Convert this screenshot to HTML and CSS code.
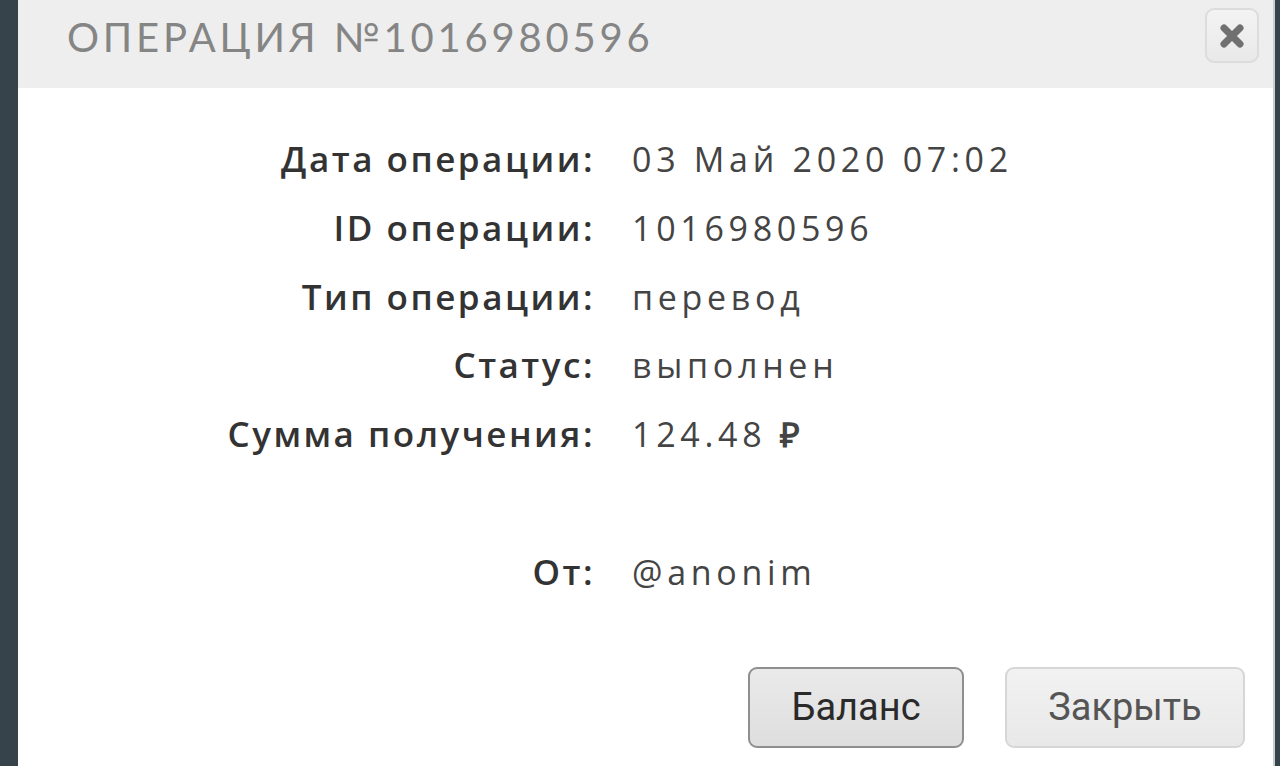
FILE: index.html
```html
<!DOCTYPE html>
<html>
<head>
    <title>Операция №1016980596</title>
    <link rel="stylesheet" href="styles.css">
</head>

<body>
    <div class="dialog">

        <div class="dialog-head">
            <h1>Операция №1016980596</h1>
            <button class="close-btn" type="button">
                <svg width="26" height="26" viewBox="0 0 26 26">
                    <path d="M5 5 L21 21 M21 5 L5 21" stroke="#707070" stroke-width="7" stroke-linecap="round"/>
                </svg>
            </button>
        </div>

        <div class="dialog-body">
            <div class="details">
                <div class="label">Дата операции:</div>
                <div class="value">03 Май 2020 07:02</div>
                <div class="label">ID операции:</div>
                <div class="value">1016980596</div>
                <div class="label">Тип операции:</div>
                <div class="value">перевод</div>
                <div class="label">Статус:</div>
                <div class="value">выполнен</div>
                <div class="label">Сумма получения:</div>
                <div class="value">124.48 <span class="rub">₽</span></div>
                <div class="label from">От:</div>
                <div class="value from">@anonim</div>
            </div>

            <div class="buttons">
                <button type="button" class="btn btn-main">Баланс</button>
                <button type="button" class="btn">Закрыть</button>
            </div>
        </div>

    </div>
</body>
</html>
```

FILE: styles.css
```css
body {
    margin: 0;
    background: #36434b;
    height: 766px;
    overflow: hidden;
    font-family: "Open Sans", Arial, sans-serif;
}

.dialog {
    margin: 0 5px 0 18px;
    height: 766px;
    background: #fff;
    border-right: 2px solid #c9ced1;
}

.dialog-head {
    height: 88px;
    background: #eeeeee;
    display: flex;
    align-items: flex-start;
    justify-content: space-between;
    padding: 0 14px 0 49px;
}

.dialog-head h1 {
    margin: 0;
    padding-top: 13px;
    font-family: Lato, sans-serif;
    font-weight: 400;
    font-size: 40px;
    letter-spacing: 3.8px;
    text-transform: uppercase;
    color: #858585;
}

.close-btn {
    margin-top: 8px;
    width: 54px;
    height: 55px;
    border: 2px solid #dcdcdc;
    border-radius: 9px;
    background: linear-gradient(#f3f3f3, #e9e9e9);
    display: flex;
    align-items: center;
    justify-content: center;
    padding: 0;
}

.details {
    display: grid;
    grid-template-columns: 577px 1fr;
    column-gap: 37px;
    align-items: baseline;
    padding-top: 37px;
}

.label {
    text-align: right;
    font-size: 35px;
    line-height: 68.8px;
    font-weight: 600;
    letter-spacing: 2.5px;
    color: #333;
}

.value {
    font-size: 34px;
    line-height: 68.8px;
    font-weight: 400;
    letter-spacing: 4.7px;
    color: #444;
}

.from {
    margin-top: 69px;
}

.rub {
    font-weight: 700;
    letter-spacing: 0;
}

.buttons {
    display: flex;
    justify-content: flex-end;
    gap: 41px;
    padding: 60px 28px 0 0;
}

.btn {
    font-family: Roboto, sans-serif;
    font-size: 38px;
    color: #555;
    height: 81px;
    width: 240px;
    border: 2px solid #d6d6d6;
    border-radius: 9px;
    background: linear-gradient(#f2f2f2, #e8e8e8);
}

.btn-main {
    width: 216px;
    color: #2a2a2a;
    border-color: #8f8f8f;
    background: linear-gradient(#eaeaea, #dedede);
}
```
